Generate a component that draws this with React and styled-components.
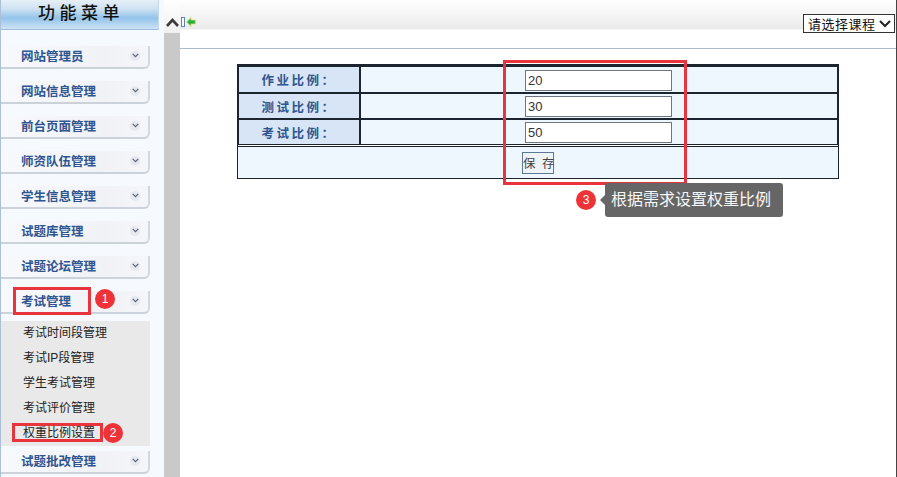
import React from "react";
import styled, { createGlobalStyle } from "styled-components";

const Global = createGlobalStyle`
  html, body { margin: 0; padding: 0; background: #fff; overflow: hidden; }
  body { font-family: "Liberation Sans", "Noto Sans CJK SC", sans-serif; }
`;

const Page = styled.div`
  position: relative;
  width: 897px;
  height: 477px;
  display: flex;
  overflow: hidden;
  background: #fff;
`;

const Sidebar = styled.aside`
  width: 164px;
  height: 477px;
  flex: none;
  box-sizing: border-box;
  border-left: 1px solid #a9c0d8;
  background: #f6f9fe;
  overflow: hidden;
`;

const SideTitle = styled.div`
  width: 158px;
  height: 30px;
  box-sizing: border-box;
  border-bottom: 1px solid #9dbbd8;
  border-right: 1px solid #c5d8ea;
  background: linear-gradient(#e6eff7 0%, #cfe2f2 30%, #93c4ea 62%, #cde2f4 100%);
  color: #111;
  font-size: 17px;
  font-weight: 500;
  letter-spacing: 4.5px;
  text-align: center;
  line-height: 27px;
  padding-left: 3px;
`;

const Menu = styled.nav`
  display: flex;
  flex-direction: column;
  padding-top: 16px;
`;

const MenuItem = styled.div`
  width: 149px;
  height: 23px;
  flex: none;
  margin-bottom: ${(p) => (p.$open ? "7px" : "12px")};
  box-sizing: border-box;
  display: flex;
  align-items: center;
  justify-content: space-between;
  padding: 0 8px 2px 20px;
  background: linear-gradient(90deg, #f7f9fd 0%, #f0f2f6 70%, #f5f6f9 100%);
  border-right: 2px solid #d3d8e0;
  border-bottom: 2px solid #ccd2da;
  border-radius: 0 0 6px 0;
  color: #2f5590;
  font-size: 12.5px;
  font-weight: 700;
`;

const Chevron = styled.span`
  width: 10px;
  height: 10px;
  border-radius: 50%;
  background: #e6e8f0;
  display: flex;
  align-items: center;
  justify-content: center;
`;

const SubMenu = styled.div`
  width: 149px;
  height: 125px;
  margin-bottom: 5px;
  background: #e9e9e9;
  display: flex;
  flex-direction: column;
`;

const SubItem = styled.div`
  height: 25px;
  line-height: 25px;
  padding-left: 22px;
  font-size: 12px;
  color: #222;
`;

const Splitter = styled.div`
  width: 16px;
  flex: none;
  display: flex;
  flex-direction: column;
  background: #c9c9c9;
`;

const SplitterHead = styled.div`
  height: 33px;
  background: linear-gradient(#ffffff, #f0f0f0);
  display: flex;
  align-items: flex-end;
  justify-content: center;
  padding: 0 0 6px 1px;
  box-sizing: border-box;
`;

const Main = styled.main`
  flex: 1;
  min-width: 0;
  box-sizing: border-box;
  border-right: 1px solid #444;
`;

const TopBar = styled.div`
  height: 49px;
  box-sizing: border-box;
  border-bottom: 1px solid #a9bdd0;
  background: linear-gradient(#fff 0, #ebebeb 29px, #fff 30px);
  display: flex;
  justify-content: space-between;
  padding: 14px 1px 0 1px;
`;

const BackIcons = styled.div`
  display: flex;
  align-items: flex-start;
  gap: 1px;
  padding-top: 3px;
`;

const CourseSelect = styled.div`
  width: 92px;
  height: 19px;
  box-sizing: border-box;
  border: 1px solid #333;
  background: #fff;
  display: flex;
  align-items: center;
  justify-content: space-between;
  padding: 0 3px 0 4px;
  font-size: 13px;
  letter-spacing: 0.5px;
  color: #111;
  white-space: nowrap;
`;

const Body = styled.div`
  padding: 15px 0 0 57px;
`;

const FormWrap = styled.div`
  width: 602px;
  box-sizing: border-box;
  border: 1px solid #1c2430;
  border-top: 0;
`;

const Grid = styled.div`
  border: 1px solid #1c2430;
  border-top: 3px solid #1c2430;
  border-left-width: 2px;
  margin: 0 0 1px -1px;
`;

const Row = styled.div`
  display: flex;
  height: ${(p) => p.$h}px;
  box-sizing: border-box;
  border-bottom: ${(p) => (p.$last ? "0" : "2px solid #1c2430")};
`;

const Label = styled.div`
  width: 122px;
  flex: none;
  box-sizing: border-box;
  border-right: 2px solid #1c2430;
  background: #d7e5f6;
  color: #2f5590;
  font-size: 12.5px;
  font-weight: 700;
  letter-spacing: 2.5px;
  display: flex;
  align-items: center;
  justify-content: center;
`;

const ValueCell = styled.div`
  flex: 1;
  background: #eef6fe;
  display: flex;
  align-items: flex-end;
  padding: 0 0 1px 164px;
`;

const Field = styled.div`
  width: 147px;
  height: 21px;
  box-sizing: border-box;
  border: 1px solid #6f7680;
  background: #fff;
  color: #333;
  font-size: 13px;
  line-height: 19px;
  padding-left: 2px;
`;

const ActionRow = styled.div`
  height: 32px;
  box-sizing: border-box;
  border-top: 1px solid #1c2430;
  background: #eef6fe;
  display: flex;
  align-items: center;
  padding-left: 284px;
`;

const SaveButton = styled.button`
  width: 32px;
  height: 22px;
  padding: 0;
  box-sizing: border-box;
  border: 1px solid #5d7894;
  background: #eef3f8;
  color: #444;
  font-family: inherit;
  font-size: 12.5px;
  letter-spacing: 1.5px;
  white-space: nowrap;
`;

const Outline = styled.div`
  position: absolute;
  box-sizing: border-box;
  border: 3px solid #e8343c;
`;

const Badge = styled.div`
  position: absolute;
  width: 20px;
  height: 20px;
  border-radius: 50%;
  background: #ee3338;
  color: #fff;
  font-size: 12px;
  line-height: 20px;
  text-align: center;
`;

const Tip = styled.div`
  position: absolute;
  left: 605px;
  top: 183px;
  width: 178px;
  height: 34px;
  border-radius: 3px;
  background: #666;
  color: #f8f8f8;
  font-size: 16px;
  line-height: 34px;
  padding-left: 6px;
  box-sizing: border-box;
  &::before {
    content: "";
    position: absolute;
    left: -5px;
    top: 12px;
    border: 5px solid transparent;
    border-left: 0;
    border-right-color: #666;
  }
`;

const Mini = () => (
  <svg width="7" height="5" viewBox="0 0 7 5" fill="none" stroke="#5a6070" strokeWidth="1.1">
    <path d="M0.7 0.8 L3.5 3.6 L6.3 0.8" />
  </svg>
);

const items = ["网站管理员", "网站信息管理", "前台页面管理", "师资队伍管理", "学生信息管理", "试题库管理", "试题论坛管理"];
const subs = ["考试时间段管理", "考试IP段管理", "学生考试管理", "考试评价管理", "权重比例设置"];
const rows = [["作业比例：", "20", 27], ["测试比例：", "30", 26], ["考试比例：", "50", 24]];

export default function App() {
  return (
    <Page>
      <Global />
      <Sidebar>
        <SideTitle>功能菜单</SideTitle>
        <Menu>
          {items.map((t) => (
            <MenuItem key={t}>{t}<Chevron><Mini /></Chevron></MenuItem>
          ))}
          <MenuItem $open>考试管理<Chevron><Mini /></Chevron></MenuItem>
          <SubMenu>
            {subs.map((t) => <SubItem key={t}>{t}</SubItem>)}
          </SubMenu>
          <MenuItem>试题批改管理<Chevron><Mini /></Chevron></MenuItem>
        </Menu>
      </Sidebar>
      <Splitter>
        <SplitterHead>
          <svg width="13" height="9" viewBox="0 0 13 9" fill="none" stroke="#3c3c3c" strokeWidth="2.6">
            <path d="M1 8 L6.5 2 L12 8" />
          </svg>
        </SplitterHead>
      </Splitter>
      <Main>
        <TopBar>
          <BackIcons>
            <svg width="4" height="10" viewBox="0 0 4 10"><rect x="0.5" y="0.5" width="3" height="9" fill="#fff" stroke="#5b83c0" /></svg>
            <svg width="10" height="10" viewBox="0 0 10 10"><path d="M0.6 5 L5 0.6 V3 H9.4 V7 H5 V9.4 Z" fill="#2fae3a" stroke="#d8e070" strokeWidth="0.8" /></svg>
          </BackIcons>
          <CourseSelect>
            请选择课程
            <svg width="12" height="8" viewBox="0 0 12 8" fill="none" stroke="#222" strokeWidth="2"><path d="M1 1 L6 6 L11 1" /></svg>
          </CourseSelect>
        </TopBar>
        <Body>
          <FormWrap>
            <Grid>
              {rows.map(([l, v, h], i) => (
                <Row key={l} $h={h} $last={i === 2}>
                  <Label>{l}</Label>
                  <ValueCell><Field>{v}</Field></ValueCell>
                </Row>
              ))}
            </Grid>
            <ActionRow><SaveButton>保 存</SaveButton></ActionRow>
          </FormWrap>
        </Body>
      </Main>
      <Outline style={{ left: 13, top: 287, width: 78, height: 28 }} />
      <Outline style={{ left: 12, top: 423, width: 91, height: 19 }} />
      <Outline style={{ left: 503, top: 60, width: 184, height: 125 }} />
      <Badge style={{ left: 95, top: 289 }}>1</Badge>
      <Badge style={{ left: 103, top: 423 }}>2</Badge>
      <Badge style={{ left: 576, top: 190 }}>3</Badge>
      <Tip>根据需求设置权重比例</Tip>
    </Page>
  );
}
